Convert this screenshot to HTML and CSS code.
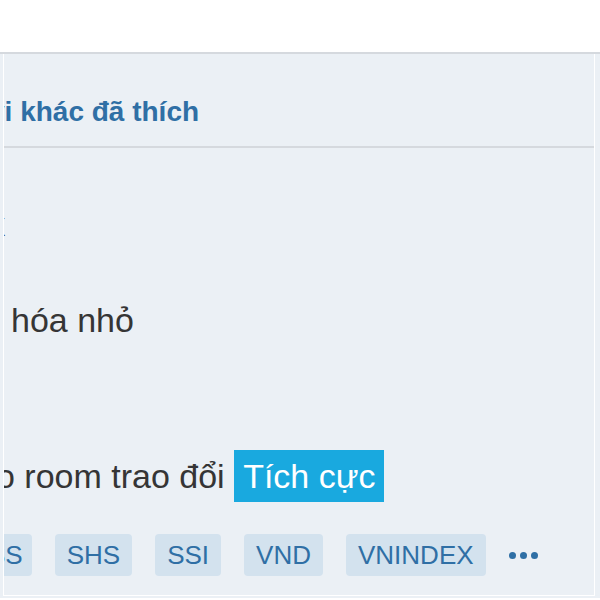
FILE: index.html
```html
<!DOCTYPE html>
<html lang="vi">
<head>
  <meta charset="UTF-8">
  <title>Bài viết</title>
  <link rel="stylesheet" href="styles.css">
</head>
<body>
  <div class="top"></div>

  <div class="panel">
    <div class="box">
      <div class="box-head">
        <a class="liked">vi khác đã thích</a>
      </div>

      <div class="post">
        <p class="line cut">k</p>
        <p class="line indent">hóa nhỏ</p>
        <p class="line last"><span class="shift">o room trao đổi</span> <span class="badge">Tích cực</span></p>

        <div class="tags">
          <span class="tag">SS</span>
          <span class="tag">SHS</span>
          <span class="tag">SSI</span>
          <span class="tag">VND</span>
          <span class="tag">VNINDEX</span>
          <span class="more"><i></i><i></i><i></i></span>
        </div>
      </div>
    </div>
  </div>
</body>
</html>
```

FILE: styles.css
```css
:root {
  --panel-bg: #ebf0f5;
  --line-color: #d5d9de;
  --link-color: #2f6fa5;
  --text-color: #353535;
  --badge-color: #19a9df;
  --tag-bg: #d3e2ee;
}

body {
  margin: 0;
  font-family: 'Liberation Sans', Arial, sans-serif;
  background: #fff;
  overflow: hidden;
}

.top {
  height: 52px;
  background: #fff;
}

.panel {
  border-top: 2px solid var(--line-color);
  background: var(--panel-bg);
  padding: 0 5px 4px 3px;
  height: 546px;
  box-sizing: border-box;
}

.box {
  border: 1px solid #fff;
  border-top: none;
  height: 542px;
  box-sizing: border-box;
  overflow: hidden;
}

.box-head {
  padding: 42px 0 18px;
  border-bottom: 2px solid var(--line-color);
}

.liked {
  display: block;
  margin-left: -15px;
  font-size: 28px;
  line-height: 32px;
  font-weight: bold;
  color: var(--link-color);
  white-space: nowrap;
}

.post {
  padding-top: 50px;
}

.line {
  margin: 0;
  font-size: 34px;
  line-height: 52px;
  color: var(--text-color);
  white-space: nowrap;
}

.cut {
  margin-left: -16px;
}

.indent {
  margin-top: 44px;
  padding-left: 7px;
}

.last {
  margin-top: 104px;
}

.shift {
  margin-left: -8px;
}

.badge {
  display: inline-block;
  padding: 0 9px;
  background: var(--badge-color);
  color: #fff;
}

.tags {
  display: flex;
  align-items: center;
  gap: 23px;
  margin-top: 32px;
  margin-left: -28px;
}

.tag {
  padding: 0 12px;
  height: 42px;
  line-height: 42px;
  font-size: 26px;
  color: var(--link-color);
  background: var(--tag-bg);
  border-radius: 4px;
  white-space: nowrap;
}

.tag:first-child {
  padding-right: 9px;
}

.more {
  display: flex;
  gap: 4px;
}

.more i {
  width: 7px;
  height: 7px;
  border-radius: 50%;
  background: var(--link-color);
}
```
